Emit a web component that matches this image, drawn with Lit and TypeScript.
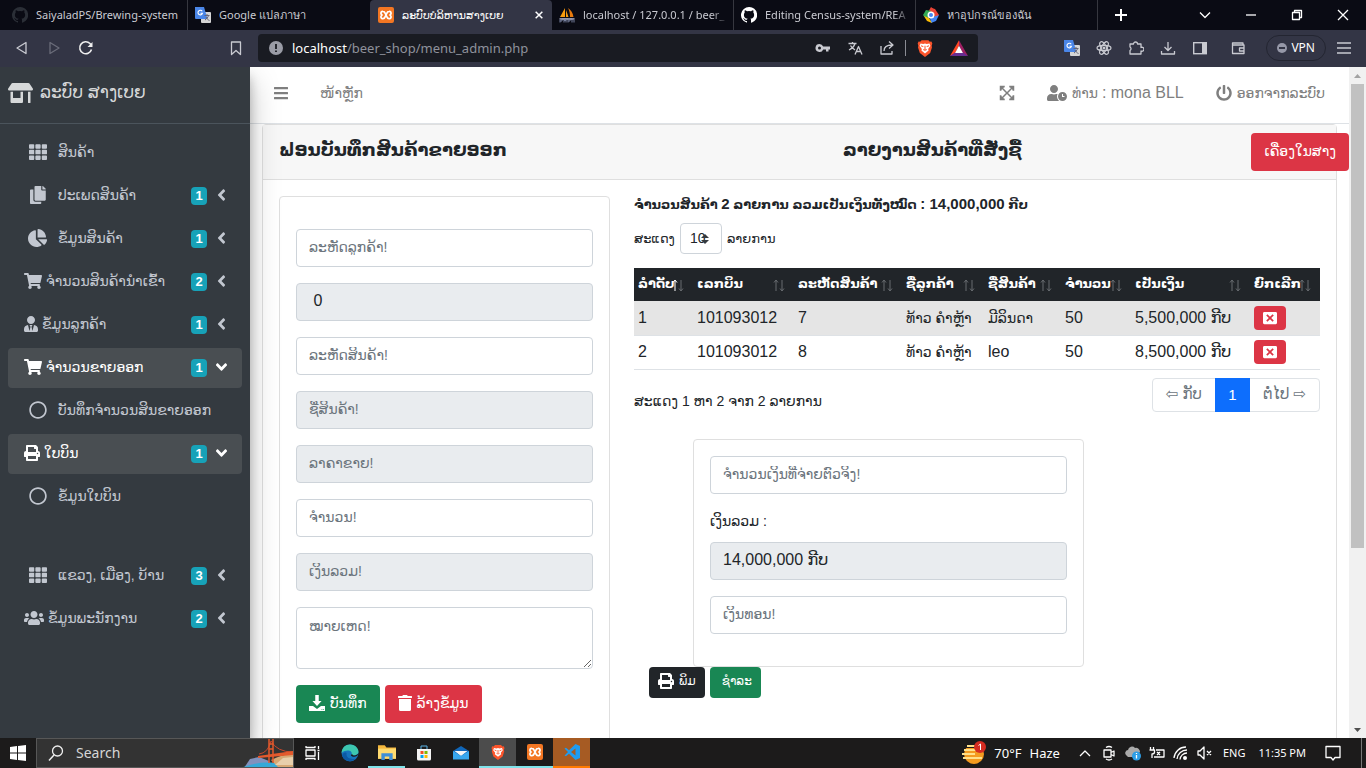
import { LitElement, html, css, svg, nothing } from "lit";
import { customElement, state } from "lit/decorators.js";
import { classMap } from "lit/directives/class-map.js";

const PATHS: Record<string, [number, string]> = {
  store: [640, "M320 384H128V224H64v256c0 17.7 14.3 32 32 32h256c17.7 0 32-14.3 32-32V224h-64v160zm314.6-241.8l-85.3-128c-6-8.9-16-14.2-26.7-14.2H117.4c-10.7 0-20.7 5.3-26.6 14.2l-85.3 128c-14.2 21.3 1 49.8 26.6 49.8H608c25.5 0 40.7-28.5 26.6-49.8zM512 496c0 8.8 7.2 16 16 16h32c8.8 0 16-7.2 16-16V224h-64v272z"],
  th: [512, "M24 32h101a24 24 0 0 1 24 24v80a24 24 0 0 1-24 24H24a24 24 0 0 1-24-24V56a24 24 0 0 1 24-24zm181 0h102a24 24 0 0 1 24 24v80a24 24 0 0 1-24 24H205a24 24 0 0 1-24-24V56a24 24 0 0 1 24-24zm182 0h101a24 24 0 0 1 24 24v80a24 24 0 0 1-24 24H387a24 24 0 0 1-24-24V56a24 24 0 0 1 24-24zM24 192h101a24 24 0 0 1 24 24v80a24 24 0 0 1-24 24H24a24 24 0 0 1-24-24v-80a24 24 0 0 1 24-24zm181 0h102a24 24 0 0 1 24 24v80a24 24 0 0 1-24 24H205a24 24 0 0 1-24-24v-80a24 24 0 0 1 24-24zm182 0h101a24 24 0 0 1 24 24v80a24 24 0 0 1-24 24H387a24 24 0 0 1-24-24v-80a24 24 0 0 1 24-24zM24 352h101a24 24 0 0 1 24 24v80a24 24 0 0 1-24 24H24a24 24 0 0 1-24-24v-80a24 24 0 0 1 24-24zm181 0h102a24 24 0 0 1 24 24v80a24 24 0 0 1-24 24H205a24 24 0 0 1-24-24v-80a24 24 0 0 1 24-24zm182 0h101a24 24 0 0 1 24 24v80a24 24 0 0 1-24 24H387a24 24 0 0 1-24-24v-80a24 24 0 0 1 24-24z"],
  copy: [448, "M320 448v40c0 13.255-10.745 24-24 24H24c-13.255 0-24-10.745-24-24V120c0-13.255 10.745-24 24-24h72v296c0 30.879 25.121 56 56 56h168zm0-344V0H152c-13.255 0-24 10.745-24 24v368c0 13.255 10.745 24 24 24h272c13.255 0 24-10.745 24-24V128H344c-13.2 0-24-10.8-24-24zm120.971-31.029L375.029 7.029A24 24 0 0 0 358.059 0H352v96h96v-6.059a24 24 0 0 0-7.029-16.97z"],
  pie: [544, "M527.79 288H290.5l158.03 158.03c6.04 6.04 15.98 6.53 22.19.68 38.7-36.46 65.32-85.61 73.13-140.86 1.34-9.46-6.51-17.85-16.06-17.85zm-15.83-64.8C503.72 103.74 408.26 8.28 288.8.04 279.68-.59 272 7.1 272 16.24V240h223.77c9.14 0 16.82-7.68 16.19-16.8zM224 288V50.71c0-9.55-8.39-17.4-17.84-16.06C86.99 51.49-4.1 155.6.14 280.37 4.5 408.51 114.83 513.59 243.03 511.98c50.4-.63 96.97-16.87 135.26-44.03 7.9-5.6 8.42-17.23 1.57-24.08L224 288z"],
  cart: [576, "M528.12 301.319l47.273-208C578.806 78.301 567.391 64 551.99 64H159.208l-9.166-44.81C147.758 8.021 137.93 0 126.529 0H24C10.745 0 0 10.745 0 24v16c0 13.255 10.745 24 24 24h69.883l70.248 343.435C147.325 417.1 136 435.222 136 456c0 30.928 25.072 56 56 56s56-25.072 56-56c0-15.674-6.447-29.835-16.824-40h209.647C430.447 426.165 424 440.326 424 456c0 30.928 25.072 56 56 56s56-25.072 56-56c0-22.172-12.888-41.332-31.579-50.405l5.517-24.276c3.413-15.018-8.002-29.319-23.403-29.319H218.117l-6.545-32h293.145c11.206 0 20.92-7.754 23.403-18.681z"],
  tie: [448, "M224 256c70.7 0 128-57.3 128-128S294.7 0 224 0 96 57.3 96 128s57.3 128 128 128zm95.8 32.6L272 480l-32-136 32-56h-96l32 56-32 136-47.8-191.4C56.9 292 0 350.3 0 422.4V464c0 26.5 21.5 48 48 48h352c26.5 0 48-21.5 48-48v-41.6c0-72.1-56.9-130.4-128.2-133.8z"],
  print: [512, "M448 192V77.25c0-8.49-3.37-16.62-9.37-22.63L393.37 9.37c-6-6-14.14-9.37-22.63-9.37H96C78.33 0 64 14.33 64 32v160c-35.35 0-64 28.65-64 64v112c0 8.84 7.16 16 16 16h48v96c0 17.67 14.33 32 32 32h320c17.67 0 32-14.33 32-32v-96h48c8.84 0 16-7.16 16-16V256c0-35.35-28.65-64-64-64zm-64 256H128v-96h256v96zm0-224H128V64h192v48c0 8.84 7.16 16 16 16h48v96zm48 72c-13.25 0-24-10.75-24-24 0-13.26 10.75-24 24-24s24 10.74 24 24c0 13.25-10.75 24-24 24z"],
  users: [640, "M96 224c35.3 0 64-28.7 64-64s-28.7-64-64-64-64 28.7-64 64 28.7 64 64 64zm448 0c35.3 0 64-28.7 64-64s-28.7-64-64-64-64 28.7-64 64 28.7 64 64 64zm32 32h-64c-17.6 0-33.5 7.1-45.1 18.6 40.3 22.1 68.9 62 75.1 109.4h66c17.7 0 32-14.3 32-32v-32c0-35.3-28.7-64-64-64zm-256 0c61.9 0 112-50.1 112-112S381.9 32 320 32 208 82.1 208 144s50.1 112 112 112zm76.8 32h-8.3c-20.8 10-43.9 16-68.5 16s-47.6-6-68.5-16h-8.3C179.6 288 128 339.6 128 403.2V432c0 26.5 21.5 48 48 48h288c26.5 0 48-21.5 48-48v-28.8c0-63.6-51.6-115.2-115.2-115.2zm-223.7-13.4C161.5 263.1 145.6 256 128 256H64c-35.3 0-64 28.7-64 64v32c0 17.7 14.3 32 32 32h65.9c6.3-47.4 34.9-87.3 75.2-109.4z"],
  circle: [512, "M256 8C119 8 8 119 8 256s111 248 248 248 248-111 248-248S393 8 256 8zm0 448c-110.500 0-200-89.500-200-200S145.500 56 256 56s200 89.500 200 200-89.500 200-200 200z"],
  left: [256, "M31.700 239l136-136c9.400-9.400 24.600-9.400 33.900 0l22.600 22.600c9.400 9.400 9.400 24.600 0 33.900L127.900 256l96.400 96.400c9.400 9.400 9.400 24.600 0 33.900L201.700 409c-9.400 9.400-24.600 9.400-33.900 0l-136-136c-9.500-9.400-9.500-24.600-.1-34z"],
  clock: [640, "M496 224c-79.6 0-144 64.4-144 144s64.4 144 144 144 144-64.4 144-144-64.4-144-144-144zm64 150.300c0 5.300-4.400 9.700-9.700 9.700h-60.600c-5.300 0-9.700-4.400-9.700-9.700v-76.600c0-5.300 4.400-9.700 9.700-9.700h12.600c5.300 0 9.700 4.400 9.700 9.700V352h38.300c5.300 0 9.700 4.400 9.700 9.700v12.600zM320 368c0-27.800 6.700-54.100 18.200-77.500-8-1.500-16.200-2.500-24.600-2.500h-16.700c-22.200 10.200-46.900 16-72.900 16s-50.600-5.800-72.900-16h-16.700C60.200 288 0 348.200 0 422.400V464c0 26.500 21.500 48 48 48h347.100c-45.300-31.900-75.100-84.500-75.100-144zm-96-112c70.700 0 128-57.300 128-128S294.700 0 224 0 96 57.300 96 128s57.300 128 128 128z"],
  power: [512, "M400 54.100c63 45 104 118.600 104 201.900 0 136.800-110.800 247.700-247.500 248C120 504.300 8.200 393 8 256.400 7.900 173.100 48.900 99.300 111.800 54.200c11.700-8.300 28-4.800 35 7.700L162.600 90c5.900 10.500 3.100 23.800-6.600 31-41.500 30.800-68 79.600-68 134.900-.1 92.300 74.500 168.100 168 168.100 91.600 0 168.600-74.200 168-169.100-.3-51.800-24.700-101.800-68.100-134-9.700-7.200-12.400-20.500-6.500-30.900l15.800-28.100c7-12.400 23.200-16.100 34.800-7.800zM296 264V24c0-13.300-10.700-24-24-24h-32c-13.300 0-24 10.700-24 24v240c0 13.300 10.700 24 24 24h32c13.300 0 24-10.700 24-24z"],
  bars: [448, "M16 132h416a16 16 0 0 0 16-16V76a16 16 0 0 0-16-16H16A16 16 0 0 0 0 76v40a16 16 0 0 0 16 16zm0 160h416a16 16 0 0 0 16-16v-40a16 16 0 0 0-16-16H16a16 16 0 0 0-16 16v40a16 16 0 0 0 16 16zm0 160h416a16 16 0 0 0 16-16v-40a16 16 0 0 0-16-16H16a16 16 0 0 0-16 16v40a16 16 0 0 0 16 16z"],
  expand: [512, "M24 24h160v50l-54 22 126 126L382 96l-54-22V24h160v160h-50l-22-54-126 126 126 126 22-54h50v160H328v-50l54-22-126-126-126 126 54 22v50H24V328h50l22 54 126-126L96 130l-22 54H24z"],
  save: [512, "M200 0h112v192h90L256 350 110 192h90zM0 352h128l128 96 128-96h128v160H0zm400 100v28h28v-28zm54 0v28h28v-28z"],
  trash: [448, "M432 32H312l-9-19a24 24 0 0 0-22-13H167a24 24 0 0 0-21 13l-10 19H16A16 16 0 0 0 0 48v32a16 16 0 0 0 16 16h416a16 16 0 0 0 16-16V48a16 16 0 0 0-16-16zM32 128h384v336a48 48 0 0 1-48 48H80a48 48 0 0 1-48-48z"],
  close: [512, "M464 32H48C21 32 0 53 0 80v352c0 27 21 48 48 48h416c27 0 48-21 48-48V80c0-27-21-48-48-48zM350 394l-94-94-94 94-44-44 94-94-94-94 44-44 94 94 94-94 44 44-94 94 94 94z"],
};

const icon = (name: string, cls = "") => {
  const [w, d] = PATHS[name];
  return html`<svg class="ico ${cls}" viewBox="0 0 ${w} 512" aria-hidden="true"><path d=${d}></path></svg>`;
};
const glyph = (body: unknown, cls = "g16", box = "0 0 16 16") =>
  html`<svg class=${cls} viewBox=${box} aria-hidden="true">${body}</svg>`;

const github = svg`<path fill="currentColor" d="M8 0a8 8 0 0 0-2.530 15.590c.4.070.55-.17.55-.38v-1.330c-2.230.48-2.700-1.070-2.700-1.070-.36-.92-.89-1.170-.89-1.170-.73-.5.050-.49.050-.49.810.06 1.230.83 1.230.83.720 1.230 1.880.87 2.340.67.070-.52.280-.87.510-1.070-1.780-.2-3.640-.89-3.640-3.950 0-.87.310-1.590.82-2.150-.08-.2-.36-1.020.08-2.120 0 0 .67-.21 2.200.82a7.600 7.600 0 0 1 4 0c1.530-1.040 2.200-.82 2.200-.82.440 1.100.160 1.920.080 2.120.510.560.820 1.270.820 2.150 0 3.070-1.870 3.750-3.650 3.950.290.250.540.730.540 1.480v2.190c0 .21.150.46.550.38A8 8 0 0 0 8 0z"/>`;
const translate = svg`<rect x="6" y="5" width="10" height="11" rx="1" fill="#d5d5d5"/><path d="M0 0h9l3.500 12H1a1 1 0 0 1-1-1z" fill="#4a86e8"/><path d="M9.500 8.500h5M12 7v1.500M13.500 8.500c-.5 2-2 3.500-3.500 4.500M11 10c.5 1.500 2 3 3.500 3.500" fill="none" stroke="#667"/><path d="M7.200 4.300A2.300 2.300 0 1 0 7.500 6.200H5.500" fill="none" stroke="#fff" stroke-width="1.100"/>`;
const xampp = svg`<rect width="16" height="16" rx="2" fill="#f37623"/><path d="M5 4.300a1.800 1.800 0 0 0-.4 3.700A1.800 1.800 0 0 0 5 11.700c2 0 2-1.700 3-3.700s1-3.700 3-3.700a1.800 1.800 0 0 1 .4 3.700 1.800 1.800 0 0 1-.4 3.700c-2 0-2-1.700-3-3.700S7 4.300 5 4.300z" fill="none" stroke="#fff" stroke-width="1.700"/>`;
const phpmyadmin = svg`<path d="M1 10 6 1v9zM7 10V3l2.500 7z" fill="#f89c0e"/><path d="M9 1c3 2 5 5 5.500 9H11c0-4-.5-6-2-9z" fill="#e87a0c"/><path d="M0 11h16l-2 2H2z" fill="#99a"/><path d="M1 15.500V12h2v2H1m4-2v3.500m0-2h2V12v3.500m2 0V12h2v2H9m4 1.500V12h2v3.500" fill="none" stroke="#77809e"/>`;
const finder = svg`<path d="M8 0l4 3-4 3-4 1z" fill="#ea4335"/><path d="M3 3l5 1v4l-5 4-3-4z" fill="#34a853"/><path d="M8 1l4 1 4 6-4 3z" fill="#ea4335"/><path d="M16 8l-3 6-5 2-1-5z" fill="#4285f4"/><path d="M1 9l5 2 3 5-5-2z" fill="#fbbc04"/><circle cx="8" cy="8" r="3.500" fill="#fff"/><circle cx="8" cy="8" r="2" fill="#4285f4"/>`;
const brave = svg`<path d="M5 1h6l1.300 1.400 1.400-.2.800 1.800-.6 2 .3 1.500-1.600 5L8 16l-4.600-3.500-1.600-5L2.100 6l-.6-2 .8-1.800 1.400.2z" fill="#fb542b"/><path d="M4 4l2.500.5L8 4l1.500.5L12 4l.8 2.200-2 2.600.4 1.500L8 12.800l-3.200-2.500.4-1.500-2-2.600z" fill="#fff"/><path d="M4.500 6l2 .8M11.500 6l-2 .8M8 6v3M6.500 9.300 8 10l1.500-.7" stroke="#fb542b" fill="none" stroke-width=".9"/>`;
const rewards = svg`<path d="M8 1 0 15l4.500-2L8 6z" fill="#ff4724"/><path d="M8 1l8 14-4.500-2L8 6z" fill="#9e1f63"/><path d="M0 15h16l-4.500-3h-7z" fill="#662d91"/><path d="M8 6l3.500 6.500h-7z" fill="#fff"/>`;
const react = svg`<circle cx="8" cy="8" r="1.500" fill="currentColor"/><g fill="none" stroke="currentColor" stroke-width="1.200"><ellipse cx="8" cy="8" rx="7" ry="2.700"/><ellipse cx="8" cy="8" rx="7" ry="2.700" transform="rotate(60 8 8)"/><ellipse cx="8" cy="8" rx="7" ry="2.700" transform="rotate(120 8 8)"/></g>`;
const line = (d: string) => svg`<path d=${d} fill="none" stroke="currentColor" stroke-width="1.300" stroke-linejoin="round"/>`;

type Tab = { title: string; art: unknown; on?: boolean; dim?: boolean; sep?: boolean };
const TABS: Tab[] = [
  { title: "SaiyaladPS/Brewing-system", art: github, dim: true, sep: true },
  { title: "Google แปลภาษา", art: translate },
  { title: "ລະບົບບໍລິຫານສາງເບຍ", art: xampp, on: true },
  { title: "localhost / 127.0.0.1 / beer_", art: phpmyadmin, sep: true },
  { title: "Editing Census-system/REA", art: github, sep: true },
  { title: "หาอุปกรณ์ของฉัน", art: finder, sep: true },
];

type Item = { icon: string; text: string; badge?: number; wide?: boolean; open?: boolean; gap?: boolean };
const MENU: Item[] = [
  { icon: "th", text: "ສິນຄ້າ", wide: true },
  { icon: "copy", text: "ປະເພດສິນຄ້າ", badge: 1, wide: true },
  { icon: "pie", text: "ຂໍ້ມູນສິນຄ້າ", badge: 1, wide: true },
  { icon: "cart", text: "ຈຳນວນສິນຄ້ານຳເຂົ້າ", badge: 2 },
  { icon: "tie", text: "ຂໍ້ມູນລູກຄ້າ", badge: 1 },
  { icon: "cart", text: "ຈຳນວນຂາຍອອກ", badge: 1, open: true },
  { icon: "circle", text: "ບັນທຶກຈຳນວນສິນຂາຍອອກ", wide: true },
  { icon: "print", text: "ໃບບິນ", badge: 1, open: true },
  { icon: "circle", text: "ຂໍ້ມູນໃບບິນ", wide: true },
  { icon: "th", text: "ແຂວງ, ເມືອງ, ບ້ານ", badge: 3, wide: true, gap: true },
  { icon: "users", text: "ຂໍ້ມູນພະນັກງານ", badge: 2 },
];

type Field = { id: string; label: string; locked?: boolean; value?: string };
const FIELDS: Field[] = [
  { id: "customer", label: "ລະຫັດລູກຄ້າ!" },
  { id: "bill", label: "ເລກບິນ", locked: true, value: " 0" },
  { id: "product", label: "ລະຫັດສິນຄ້າ!" },
  { id: "name", label: "ຊື່ສິນຄ້າ!", locked: true },
  { id: "price", label: "ລາຄາຂາຍ!", locked: true },
  { id: "qty", label: "ຈຳນວນ!" },
  { id: "total", label: "ເງິນລວມ!", locked: true },
];

const HEADS = ["ລຳດັບ", "ເລກບິນ", "ລະຫັດສິນຄ້າ", "ຊື່ລູກຄ້າ", "ຊື່ສິນຄ້າ", "ຈຳນວນ", "ເປັນເງິນ", "ຍົກເລີກ"];
const ROWS = [
  ["1", "101093012", "7", "ທ້າວ ຄຳຫຼ້າ", "ມີລິນດາ", "50", "5,500,000 ກີບ"],
  ["2", "101093012", "8", "ທ້າວ ຄຳຫຼ້າ", "leo", "50", "8,500,000 ກີບ"],
];
const startsLao = (s: string) => /^[\u0e80-\u0eff]/.test(s);

const base = css`
  *, *::before, *::after { box-sizing: border-box; }
  button, input, select, textarea { font: inherit; color: inherit; margin: 0; }
  button { border: 0; padding: 0; background: none; cursor: pointer; }
  a { color: inherit; text-decoration: none; }
  svg { display: block; flex: none; }
  .ico { height: 16px; width: auto; fill: currentColor; }
  .g16 { width: 16px; height: 16px; }
`;

@customElement("browser-bar")
class BrowserBar extends LitElement {
  static styles = [base, css`
    :host { display: block; flex: none; color: #c9cad1; font: 11px/16px "Noto Sans", "DejaVu Sans", sans-serif; }
    .tabs { display: flex; height: 30px; background: #0a0b14; }
    .tab { flex: 0 1 182px; min-width: 0; display: flex; align-items: center; gap: 8px; padding: 0 6px 0 12px; }
    .tab.first { flex-basis: 188px; padding-right: 4px; }
    .tab.on { background: #333545; color: #fff; border-radius: 4px 4px 0 0; padding: 0 8px; }
    .tab.sep { border-right: 1px solid #36373f; }
    .tab.mid { padding: 0 4px 0 7px; }
    .title { flex: 1; overflow: hidden; white-space: nowrap; }
    .dim svg { color: #2b2f37; }
    .fade { mask-image: linear-gradient(90deg, #000 88%, transparent); }
    .white svg { color: #fff; }
    .g10 { width: 10px; height: 10px; }
    .win { flex: 1; display: flex; align-items: center; color: #fff; }
    .win button { flex: none; width: 46px; display: grid; place-items: center; }
    .plus { margin-right: auto; }
    .bar { display: flex; align-items: center; height: 37px; background: #333545; padding: 0 14px 2px; }
    .nav { display: flex; gap: 16px; width: 244px; }
    .nav .mark { margin-left: auto; margin-right: 14px; }
    .off { color: #6a6c79; }
    .url { flex: 0 1 720px; min-width: 0; display: flex; align-items: center; height: 28px; background: #191b22; border-radius: 4px; padding: 0 10px; gap: 16px; }
    .text { flex: 1; font-size: 13px; color: #8f929c; margin-left: -8px; }
    .text b { font-weight: 400; color: #fff; }
    .split { width: 1px; height: 16px; background: #8a8c94; margin: 0 -6px; }
    .ext { flex: 1; display: flex; align-items: center; justify-content: flex-end; gap: 16px; }
    .wallet { width: 16px; height: 16px; margin-left: 6px; }
    .vpn { display: flex; align-items: center; gap: 4px; height: 26px; border: 1px solid #232531; border-radius: 13px; padding: 0 10px; margin: 0 -6px 0 4px; color: #fff; font-size: 12px; }
    .dot { width: 10px; height: 10px; border-radius: 50%; background: #9698a8; display: grid; place-items: center; }
    .dot::before { content: ""; width: 6px; height: 2px; background: #333545; }
    .big { width: 18px; height: 18px; }
  `];

  render() {
    return html`
      <div class="tabs">
        ${TABS.map((t, i) => html`
          <div class=${classMap({ tab: true, on: !!t.on, sep: !!t.sep, dim: !!t.dim, first: i === 0, mid: i > 0 && !t.on, white: i === 4 })}>
            ${glyph(t.art)}
            <span class=${classMap({ title: true, fade: i === 3 || i === 4 })}>${t.title}</span>
            ${t.on ? html`<button aria-label="Close tab">${glyph(svg`<path d="M1 1l8 8M9 1l-8 8" stroke="#fff" stroke-width="1.800"/>`, "g10", "-1 -1 12 12")}</button>` : nothing}
          </div>`)}
        <div class="win">
          <button class="plus" aria-label="New tab">${glyph(svg`<path d="M8 2v12M2 8h12" stroke="#fff" stroke-width="2"/>`)}</button>
          <button aria-label="Tabs">${glyph(line("M3 5.500l5 5 5-5"))}</button>
          <button aria-label="Minimize">${glyph(line("M3 8h10"))}</button>
          <button aria-label="Restore">${glyph(line("M3.500 5.500h7v7h-7zM5.500 5V3.500h7v7H11"))}</button>
          <button aria-label="Close">${glyph(line("M3 3l10 10M13 3L3 13"))}</button>
        </div>
      </div>
      <div class="bar">
        <div class="nav">
          <button aria-label="Back">${glyph(line("M12 2.500v11L3 8z"))}</button>
          <button class="off" aria-label="Forward">${glyph(line("M4 2.500v11L13 8z"))}</button>
          <button aria-label="Reload">${glyph(svg`<path d="M13.500 9.500A6 6 0 1 1 12 3.500l1.500 2" fill="none" stroke="#eee" stroke-width="1.600"/><path d="M14.500 2v5h-5z" fill="#eee"/>`)}</button>
          <button class="mark" aria-label="Bookmark">${glyph(line("M3.500 2h9v12.500L8 10.500l-4.500 4z"))}</button>
        </div>
        <div class="url">
          ${glyph(svg`<circle cx="8" cy="8" r="7" fill="#9a9ca6"/><path d="M8 4v5M8 10.500v1.500" stroke="#191b22" stroke-width="1.800"/>`)}
          <div class="text"><b>localhost</b>/beer_shop/menu_admin.php</div>
          ${glyph(svg`<path d="M4.500 4a4 4 0 0 1 3.700 2.500H15v3h-1.500v2h-2.500v-2H8.200A4 4 0 1 1 4.500 4z" fill="currentColor"/><circle cx="4.500" cy="8" r="1.500" fill="#191b22"/>`)}
          ${glyph(svg`${line("M1.500 3.500h8M5.500 2v1.500M8 3.500C7 7 4 9 2 10M3.500 5.500c1 2 3 3.500 4.500 4.500")}${line("M8 14.500l3.500-8 3.500 8M9.500 11.500h4")}`)}
          ${glyph(line("M2 6v8h11v-3M5 11c0-4 3-6 8-6M10 1.500L14 5l-4 3.500"))}
          <div class="split"></div>
          ${glyph(brave, "big")}
          ${glyph(rewards, "big")}
        </div>
        <div class="ext">
          ${glyph(translate)}
          ${glyph(react)}
          ${glyph(line("M2 4h3.500a2 2 0 1 1 4 0H13v3.500a2 2 0 1 1 0 3.500v3H2v-3.500a2 2 0 0 0 0-3.500z"))}
          ${glyph(line("M8 2v8M4.500 7L8 10.500 11.500 7M1.500 11v3h13v-3"))}
          ${glyph(svg`<rect x="1.700" y="2.700" width="12.600" height="11" fill="none" stroke="currentColor" stroke-width="1.400"/><path d="M10 2h5v12h-5z" fill="currentColor"/>`)}
          ${glyph(line("M13 5V3H2.500v10.500H14V5H3M14 8H9.500v3H14"), "wallet")}
          <button class="vpn"><span class="dot"></span>VPN</button>
          <button aria-label="Menu">${glyph(line("M1 3h14M1 8h14M1 13h14"))}</button>
        </div>
      </div>`;
  }
}

@customElement("side-menu")
class SideMenu extends LitElement {
  static styles = [base, css`
    :host { position: relative; z-index: 2; display: block; flex: 0 0 250px; background: #343a40; color: #c2c7d0; font: 14px/24px "Liberation Sans", "DejaVu Sans", sans-serif; box-shadow: 0 14px 28px rgba(0,0,0,.25), 0 10px 10px rgba(0,0,0,.22); }
    .brand { display: flex; align-items: center; gap: 7px; height: 57px; padding: 0 8px 4px; border-bottom: 1px solid #4b545c; font-size: 17px; color: #d6d8d9; }
    .brand .ico { height: 20px; }
    nav { display: flex; flex-direction: column; gap: 3px; padding: 9px 8px; }
    .item { display: flex; align-items: center; gap: 4px; height: 40px; padding: 0 16px 3px; border-radius: 4px; white-space: nowrap; }
    .open { background: #494e52; color: #fff; }
    .gap { margin-top: 36px; }
    .slot { flex: none; display: grid; place-items: center; }
    .wide .slot { width: 28px; margin-right: 2px; }
    .wide .ico { height: 18px; }
    .badge { margin-left: auto; background: #17a2b8; color: #fff; border-radius: 4px; font: 700 13px/18px "Liberation Sans", sans-serif; width: 16px; text-align: center; margin-top: 2px; }
    .item .arrow { height: 18px; margin-left: 6px; }
    .open .arrow { rotate: -90deg; }
  `];

  render() {
    return html`
      <div class="brand">${icon("store")}<span>ລະບົບ ສາງເບຍ</span></div>
      <nav>
        ${MENU.map((m) => html`
          <a href="#" class=${classMap({ item: true, wide: !!m.wide, open: !!m.open, gap: !!m.gap })}>
            <span class="slot">${icon(m.icon)}</span>
            <span>${m.text}</span>
            ${m.badge ? html`<span class="badge">${m.badge}</span>${icon("left", "arrow")}` : nothing}
          </a>`)}
      </nav>`;
  }
}

@customElement("sales-page")
class SalesPage extends LitElement {
  @state() private rows = ROWS;

  static styles = [base, css`
    :host { display: block; flex: 1; min-width: 0; overflow: hidden; background: #fff; color: #212529; font: 14px/24px "Liberation Sans", "DejaVu Sans", sans-serif; }
    .latin { font-size: 16px; }
    .top { display: flex; align-items: center; height: 57px; padding: 0 24px 4px; border-bottom: 1px solid #dee2e6; color: #7f7f7f; }
    .top a { display: flex; align-items: center; gap: 5px; }
    .home { margin-left: 32px; }
    .expand { margin-left: auto; }
    .user, .exit { margin-left: 32px; }
    .card { margin: 0 12px; border: 1px solid #dfdfdf; border-radius: 4px 4px 0 0; }
    .head { display: grid; grid-template-columns: 566fr 410fr auto; align-items: start; padding: 8px 0 8px 16px; margin-right: -13px; height: 54px; }
    .strip { background: #f7f7f7; border-bottom: 1px solid #dfdfdf; }
    h1 { margin: 0; font-size: 18px; line-height: 34px; white-space: nowrap; }
    .btn { display: inline-flex; align-items: center; gap: 5px; height: 38px; padding: 0 13px 2px; border-radius: 4px; color: #fff; white-space: nowrap; }
    .red { background: #dc3545; }
    .green { background: #198754; }
    .dark { background: #212529; }
    .btn.small { height: 31px; padding: 0 9px 2px; font-size: 12px; }
    .body { display: grid; grid-template-columns: minmax(0, 331fr) minmax(0, 686fr); gap: 24px; padding: 16px; }
    .panel { border: 1px solid #dfdfdf; border-radius: 4px; padding: 16px; }
    .sale { display: grid; gap: 16px; padding-top: 32px; min-height: 600px; align-content: start; }
    .field { display: block; width: 100%; height: 38px; padding: 6px 12px 8px; border: 1px solid #ced4da; border-radius: 4px; background: #fff; outline: 0; font-size: 16px; }
    .field::placeholder { color: #6c757d; opacity: 1; font-size: 14px; }
    .field:read-only { background: #e9ecef; }
    .area { height: 62px; resize: vertical; }
    .acts { display: flex; gap: 5px; }
    .sum { margin: 0; font-size: 13px; line-height: 16px; font-weight: 700; }
    .sum .latin { font-size: 15px; }
    .length { display: flex; align-items: center; gap: 5px; margin-top: 10px; font-size: 13px; }
    .pick { position: relative; }
    .pick select { display: block; appearance: none; width: 42px; height: 31px; border: 1px solid #ced4da; border-radius: 4px; background: #fff; padding: 0 0 2px 9px; font-size: 14px; }
    .pick svg { position: absolute; right: 12px; top: 11px; width: 10px; height: 10px; pointer-events: none; }
    table { width: 100%; margin-top: 14px; border-collapse: collapse; table-layout: fixed; white-space: nowrap; }
    th { position: relative; height: 33px; padding: 0 0 2px 4px; background: #212529; color: #fff; text-align: left; font-size: 13px; }
    th svg { position: absolute; right: 9px; top: 11px; width: 12px; height: 13px; }
    td { height: 34px; padding: 0 4px; border-bottom: 1px solid #dee2e6; }
    tr.odd td { background: #e5e5e5; }
    .c0 { width: 59px; } .c1 { width: 101px; } .c2 { width: 108px; } .c3 { width: 82px; } .c4 { width: 77px; } .c5 { width: 70px; } .c6 { width: 119px; } .c7 { width: 70px; }
    .del { display: grid; place-items: center; width: 32px; height: 24px; border-radius: 4px; background: #dc3545; color: #fff; }
    .del .ico { height: 14px; }
    .foot { display: flex; justify-content: space-between; padding-top: 8px; }
    .info { margin: 11px 0 0; }
    .pages { display: flex; height: 34px; border: 1px solid #dee2e6; border-radius: 4px; color: #6c757d; font-size: 15px; }
    .pages button { padding: 0 13px 2px; }
    .pages .now { background: #0d6efd; color: #fff; margin: -1px 0; width: 35px; padding: 0; }
    .pay { width: 57%; margin: 26px 0 0 59px; height: 228px; }
    .pay label { display: block; margin: 15px 0 9px; }
    .change { margin-top: 16px; }
    .done { padding-left: 15px; display: flex; gap: 5px; }
    .green.small { padding-left: 12px; }
  `];

  private sort(active: boolean) {
    return html`<svg viewBox="0 0 12 13" aria-hidden="true">
      <path d="M3 12V1M1 3.500L3 1l2 2.500" fill="none" stroke=${active ? "#fff" : "#686c70"}/>
      <path d="M9 1v11M7 9.500L9 12l2-2.500" fill="none" stroke="#686c70"/></svg>`;
  }

  render() {
    return html`
      <header class="top">
        <a href="#" aria-label="Menu">${icon("bars")}</a>
        <a class="home" href="#">ໜ້າຫຼັກ</a>
        <a class="expand" href="#" aria-label="Full screen">${icon("expand")}</a>
        <a class="user" href="#">${icon("clock")}<span>ທ່ານ <span class="latin">: mona BLL</span></span></a>
        <a class="exit" href="#">${icon("power")}ອອກຈາກລະບົບ</a>
      </header>
      <main class="card">
        <div class="strip"><div class="head">
          <h1>ຟອນບັນທຶກສິນຄ້າຂາຍອອກ</h1>
          <h1>ລາຍງານສິນຄ້າທີ່ສັ່ງຊື້</h1>
          <button class="btn red">ເຄື່ອງໃນສາງ</button>
        </div></div>
        <div class="body">
          <form class="panel sale" @submit=${(e: Event) => e.preventDefault()}>
            ${FIELDS.map((f) => html`<input class="field" id=${f.id} aria-label=${f.label}
              placeholder=${f.value ? "" : f.label} .value=${f.value ?? ""} ?readonly=${!!f.locked}>`)}
            <textarea class="field area" aria-label="ໝາຍເຫດ" placeholder="ໝາຍເຫດ!"></textarea>
            <div class="acts">
              <button class="btn green">${icon("save")}ບັນທຶກ</button>
              <button class="btn red" type="reset">${icon("trash")}ລ້າງຂໍ້ມູນ</button>
            </div>
          </form>
          <section>
            <p class="sum">ຈຳນວນສິນຄ້າ <span class="latin">2</span> ລາຍການ ລວມເປັນເງິນທັງໝົດ <span class="latin">: 14,000,000</span> ກີບ</p>
            <div class="length">
              <label for="len">ສະແດງ</label>
              <span class="pick"><select id="len"><option>10</option><option>25</option></select>
                <svg viewBox="0 0 10 10" aria-hidden="true"><path d="M5 0l4 4H1zM5 10L1 6h8z" fill="#343a40"></path></svg></span>
              <span>ລາຍການ</span>
            </div>
            <table>
              <thead><tr>${HEADS.map((h, i) => html`<th class="c${i}">${h}${this.sort(i === 0)}</th>`)}</tr></thead>
              <tbody>${this.rows.map((r, i) => html`<tr class=${i % 2 ? "even" : "odd"}>
                ${r.map((c) => html`<td class=${startsLao(c) ? "lao" : "latin"}>${c}</td>`)}
                <td><button class="del" aria-label="ຍົກເລີກ">${icon("close")}</button></td></tr>`)}</tbody>
            </table>
            <div class="foot">
              <p class="info">ສະແດງ 1 ຫາ 2 ຈາກ 2 ລາຍການ</p>
              <div class="pages"><button>⇦ ກັບ</button><button class="now">1</button><button>ຕໍ່ໄປ ⇨</button></div>
            </div>
            <div class="panel pay">
              <input class="field" aria-label="ຈຳນວນເງິນທີ່ຈ່າຍ" placeholder="ຈຳນວນເງິນທີ່ຈ່າຍຕົວຈິງ!">
              <label for="sum">ເງິນລວມ :</label>
              <input class="field" id="sum" readonly .value=${"14,000,000 ກີບ"}>
              <input class="field change" aria-label="ເງິນທອນ" placeholder="ເງິນທອນ!">
            </div>
            <div class="done">
              <button class="btn dark small">${icon("print")}ພິມ</button>
              <button class="btn green small">ຊຳລະ</button>
            </div>
          </section>
        </div>
      </main>`;
  }
}

@customElement("task-bar")
class TaskBar extends LitElement {
  static styles = [base, css`
    :host { display: flex; flex: none; height: 30px; background: #1c1b1b; color: #fff; font: 11px/16px "Noto Sans", sans-serif; align-items: stretch; }
    button { flex: none; width: 37px; display: grid; place-items: center; }
    .start { width: 36px; }
    .search { flex: 0 1 258px; display: flex; align-items: center; gap: 12px; background: #333; border: 1px solid #575757; padding: 0 0 0 11px; overflow: hidden; }
    .search input { flex: 1; min-width: 0; border: 0; outline: 0; background: none; font-size: 14px; padding: 0; }
    .search input::placeholder { color: #d6d6d6; opacity: 1; }
    .bridge { width: 52px; height: 30px; }
    .run { border-bottom: 2px solid #7fe3ea; }
    .brave { background: #4c4c4c; }
    .code { background: #a65b23; border-bottom: 2px solid #ff7a00; }
    .g18 { width: 18px; height: 18px; }
    .tray { margin-left: auto; display: flex; align-items: center; gap: 8px; padding-right: 4px; }
    .weather { display: flex; gap: 8px; align-items: center; font-size: 13px; margin-right: 9px; }
    .sun { width: 24px; height: 24px; }
    .time { margin: 0 11px 0 5px; }
    .lang { margin-left: 2px; }
    .edge { width: 1px; height: 30px; background: #777; margin-left: 12px; }
  `];

  render() {
    return html`
      <button class="start" aria-label="Start">${glyph(svg`<path d="M0 2l7-1v6.500H0zM8 .900L16 0v7.500H8zM0 8.500h7V15l-7-1zM8 8.500h8V16l-8-.9z" fill="#fff"/>`)}</button>
      <label class="search">
        ${glyph(svg`<circle cx="9.500" cy="6" r="5" fill="none" stroke="#eee" stroke-width="1.300"/><path d="M6 10l-5 5.500" stroke="#eee" stroke-width="1.500"/>`)}
        <input aria-label="Search" placeholder="Search">
        <svg class="bridge" viewBox="0 0 52 30" aria-hidden="true">
          <path d="M3 30l6-9 9-2 10 4 5 7z" fill="#8291bd"/><path d="M0 30c12-5 25-7 40-4l8 4z" fill="#35a9d8"/>
          <path d="M30 22c8-4 14-6 22-6v14H38z" fill="#d6a874"/><path d="M34 27l8-7 10-1v8z" fill="#e8cfac"/>
          <path d="M18 16Q27 15 30 3q6 11 22 11" fill="none" stroke="#c8472b"/>
          <path d="M17 18l35-5v4l-35 3z" fill="#e3592c"/><path d="M28 1v24M32 1v24M28 6h4M28 11h4" stroke="#e3592c" stroke-width="1.500" fill="none"/>
        </svg>
      </label>
      <button aria-label="Task view">${glyph(line("M1 1v1.500h9V1M1 5h9v6H1zM1 15v-1.500h9V15M13.500 1v3M13.500 7v8M12.500 5.500h2"))}</button>
      <button aria-label="Edge">${glyph(svg`<circle cx="8" cy="8" r="7.500" fill="#1673bd"/><path d="M.5 8C1 3 4 .5 8 .500c5 0 8 4 7.500 7-1 3-5 3-6 2 1-4-5-5-9-1.500z" fill="#3dc7b0"/><path d="M5 8c-1 4 3 6 8 5-4 4-11 2-12-3 1-2 2-3 4-2z" fill="#0c59a4"/><path d="M10 9c1 2 4 1 5.500-.5C15 11 12 12 10 11s-1-2 0-2z" fill="#1c1b1b"/>`, "g18")}</button>
      <button class="run" aria-label="Explorer">${glyph(svg`<path d="M0 2h6l1.500 2H16v10H0z" fill="#f5b83d"/><path d="M0 5h16v9H0z" fill="#ffdb70"/><path d="M3 15V9h10v6h-3v-3H6v3z" fill="#3f8fd6"/>`, "g18")}</button>
      <button aria-label="Store">${glyph(svg`<path d="M5 4V1h6v3" fill="none" stroke="#5bb5e8"/><path d="M1 4h14v10a1.500 1.500 0 0 1-1.500 1.500h-11A1.500 1.500 0 0 1 1 14z" fill="#f4f4f4"/><path d="M4.500 6h3v3h-3z" fill="#f25022"/><path d="M8.500 6h3v3h-3z" fill="#7fba00"/><path d="M4.500 10h3v3h-3z" fill="#00a4ef"/><path d="M8.500 10h3v3h-3z" fill="#ffb900"/>`)}</button>
      <button aria-label="Mail">${glyph(svg`<path d="M0 6l8-5 8 5v8H0z" fill="#1066b8"/><path d="M1.500 6h13L8 11z" fill="#f5f5f5"/><path d="M0 6l8 5 8-5v8.500H0z" fill="#38a7ee"/>`)}</button>
      <button class="run brave" aria-label="Brave">${glyph(brave)}</button>
      <button class="run" aria-label="XAMPP">${glyph(xampp)}</button>
      <button class="code" aria-label="Code">${glyph(svg`<path d="M11.500 0L16 2v12l-4.500 2L5 9.800 2 12.200.5 11.400 4 8 .5 4.600 2 3.800l3 2.400zM11.500 4.500L7 8l4.500 3.500z" fill="#1f9cf0" fill-rule="evenodd"/>`)}</button>
      <div class="tray">
        <div class="weather">
          <svg class="sun" viewBox="0 0 24 24" aria-hidden="true"><circle cx="12" cy="13" r="10" fill="#f49b1f"/><path d="M4 1h10v6H2z" fill="#1c1b1b"/><path d="M5 5h8M2 9h16M0 13h13M1 17h19" stroke="#ffe08a" stroke-width="2"/><circle cx="18" cy="6" r="6" fill="#d42c22"/><path d="M16.500 4.500L18.500 3v6" fill="none" stroke="#fff"/></svg>
          <span>70°F</span><span>Haze</span>
        </div>
        ${glyph(line("M3 11l5-5 5 5"))}
        ${glyph(line("M3 5h7v7H3zM10 7.500l3-1.500v5l-3-1.500M5 2.500q3-2 6 0M5 14q3 2 6 0"))}
        ${glyph(svg`<path d="M1 10a3 3 0 0 1 2-5 4 4 0 0 1 7-2 4 4 0 0 1 5 4l-5 5H3z" fill="#aaa"/><circle cx="11.500" cy="11" r="4.500" fill="#2d9ee6"/><path d="M11.500 10v3.500M11.500 8v1" stroke="#fff" stroke-width="1.300"/>`)}
        ${glyph(line("M1.500 2v3M4.500 2v3M.5 5h5v2q0 2-2.500 2v4M7 5h8v7H5M8 7l3 3M11 7L8 10"))}
        ${glyph(svg`${line("M1 13A12 12 0 0 1 13 2M4 14a10 10 0 0 1 10-9M7 14.500a7 7 0 0 1 7-6.500")}<circle cx="12" cy="13" r="2" fill="#fff"/>`)}
        ${glyph(line("M1 6h2l4-4v12l-4-4H1zM10 6l4 4M14 6l-4 4"))}
        <span class="lang">ENG</span>
        <span class="time">11:35 PM</span>
        ${glyph(line("M1 1.500h14v11H10L8 15l-2-2.500H1z"))}
        <span class="edge"></span>
      </div>`;
  }
}

@customElement("app-root")
class AppRoot extends LitElement {
  static styles = [base, css`
    :host { display: flex; flex-direction: column; height: 100vh; overflow: hidden; }
    .page { flex: 1; min-height: 0; display: flex; overflow: hidden; background: #fff; }
    .scroll { flex: 0 0 17px; display: flex; flex-direction: column; align-items: center; background: #f1f1f1; }
    .scroll button { height: 17px; display: grid; place-items: center; }
    .thumb { width: 13px; flex: 0 1 464px; background: #c1c1c1; }
    .down { margin-top: auto; }
    .tri { width: 7px; height: 4px; }
  `];

  render() {
    return html`
      <browser-bar></browser-bar>
      <div class="page">
        <side-menu></side-menu>
        <sales-page></sales-page>
        <div class="scroll">
          <button aria-label="Scroll up">${glyph(svg`<path d="M0 4l3.500-4L7 4z" fill="#a3a3a3"/>`, "tri", "0 0 7 4")}</button>
          <div class="thumb"></div>
          <button class="down" aria-label="Scroll down">${glyph(svg`<path d="M0 0h7L3.500 4z" fill="#505050"/>`, "tri", "0 0 7 4")}</button>
        </div>
      </div>
      <task-bar></task-bar>`;
  }
}
